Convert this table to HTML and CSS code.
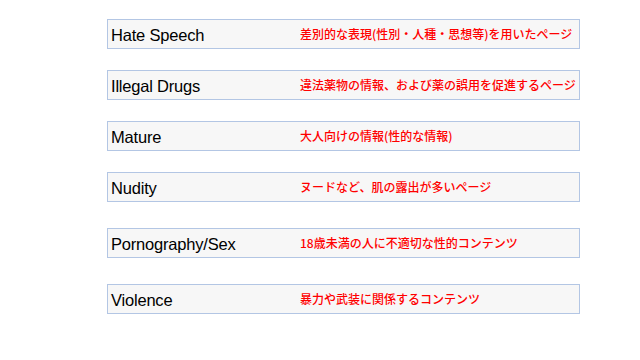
FILE: index.html
```html
<!DOCTYPE html>
<html lang="ja">
<head>
<meta charset="utf-8">
<link rel="stylesheet" href="styles.css">
</head>
<body>
<div class="list">
  <div class="row"><span class="label">Hate Speech</span><span class="desc">差別的な表現(性別・人種・思想等)を用いたページ</span></div>
  <div class="row"><span class="label">Illegal Drugs</span><span class="desc">違法薬物の情報、および薬の誤用を促進するページ</span></div>
  <div class="row"><span class="label">Mature</span><span class="desc">大人向けの情報(性的な情報)</span></div>
  <div class="row"><span class="label">Nudity</span><span class="desc">ヌードなど、肌の露出が多いページ</span></div>
  <div class="row row-wide"><span class="label">Pornography/Sex</span><span class="desc">18歳未満の人に不適切な性的コンテンツ</span></div>
  <div class="row row-wide"><span class="label">Violence</span><span class="desc">暴力や武装に関係するコンテンツ</span></div>
</div>
</body>
</html>
```
FILE: styles.css
```css
html, body {
  margin: 0;
  padding: 0;
  background: #ffffff;
}
.list {
  display: flex;
  flex-direction: column;
  margin: 19px 0 0 107px;
  width: 473px;
}
.row {
  display: flex;
  align-items: center;
  box-sizing: border-box;
  height: 30px;
  border: 1px solid #b3c6e4;
  background: #f7f7f7;
  margin-bottom: 21px;
}
.row-wide {
  margin-top: 5px;
}
.label {
  width: 189px;
  padding-left: 3px;
  padding-top: 2px;
  font-family: "Liberation Sans", Arial, sans-serif;
  font-size: 16.5px;
  color: #000000;
  letter-spacing: -0.2px;
}
.desc {
  font-family: "Noto Sans CJK JP", sans-serif;
  font-size: 12px;
  font-weight: 500;
  color: #ff0000;
  padding-bottom: 1px;
}
```
